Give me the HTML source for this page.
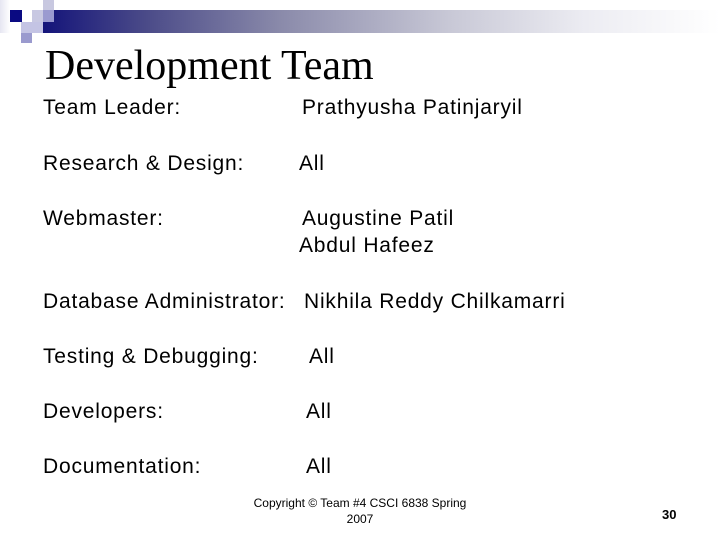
<!DOCTYPE html>
<html><head><style>
body{margin:0;width:720px;height:540px;background:#fff;position:relative;overflow:hidden;font-family:"Liberation Sans",Arial,sans-serif;color:#000}
.a{position:absolute}
.t{position:absolute;font-size:21px;letter-spacing:0.8px;white-space:nowrap}
</style></head><body>
<div class="a" style="left:0;top:0;width:10px;height:33px;background:linear-gradient(90deg,#e6e6f2,#fff)"></div>
<div class="a" style="left:10px;top:10px;width:12px;height:12px;background:#0a0a82"></div>
<div class="a" style="left:43px;top:0;width:11px;height:10px;background:#c8c8e0"></div>
<div class="a" style="left:32px;top:10px;width:11px;height:12px;background:#c8c8e2"></div>
<div class="a" style="left:43px;top:10px;width:677px;height:23px;background:linear-gradient(90deg,#14147a 0%,#4a4a88 15%,#8a8aaa 35%,#c8c8d6 60%,#ececf2 80%,#fff 100%)"></div>
<div class="a" style="left:43px;top:10px;width:11px;height:12px;background:#9a9ad0"></div>
<div class="a" style="left:21px;top:22px;width:22px;height:11px;background:#c4c4e4"></div>
<div class="a" style="left:21px;top:33px;width:11px;height:10px;background:#9a9ace"></div>
<div class="a" style="left:45px;top:42px;font-family:'Liberation Serif',serif;font-size:42px;white-space:nowrap">Development Team</div>
<div class="t" style="left:43px;top:96px">Team Leader:</div>
<div class="t" style="left:302px;top:96px">Prathyusha Patinjaryil</div>
<div class="t" style="left:43px;top:152px">Research &amp; Design:</div>
<div class="t" style="left:299px;top:152px">All</div>
<div class="t" style="left:43px;top:207px">Webmaster:</div>
<div class="t" style="left:302px;top:207px">Augustine Patil</div>
<div class="t" style="left:299px;top:234px">Abdul Hafeez</div>
<div class="t" style="left:43px;top:290px">Database Administrator:</div>
<div class="t" style="left:304px;top:290px">Nikhila Reddy Chilkamarri</div>
<div class="t" style="left:43px;top:345px">Testing &amp; Debugging:</div>
<div class="t" style="left:309px;top:345px">All</div>
<div class="t" style="left:43px;top:400px">Developers:</div>
<div class="t" style="left:306px;top:400px">All</div>
<div class="t" style="left:43px;top:455px">Documentation:</div>
<div class="t" style="left:306px;top:455px">All</div>
<div class="a" style="left:250px;top:495px;width:220px;text-align:center;font-size:12px;line-height:16px">Copyright © Team #4 CSCI 6838 Spring 2007</div>
<div class="a" style="left:662px;top:507px;font-size:13px;font-weight:bold">30</div>
</body></html>
